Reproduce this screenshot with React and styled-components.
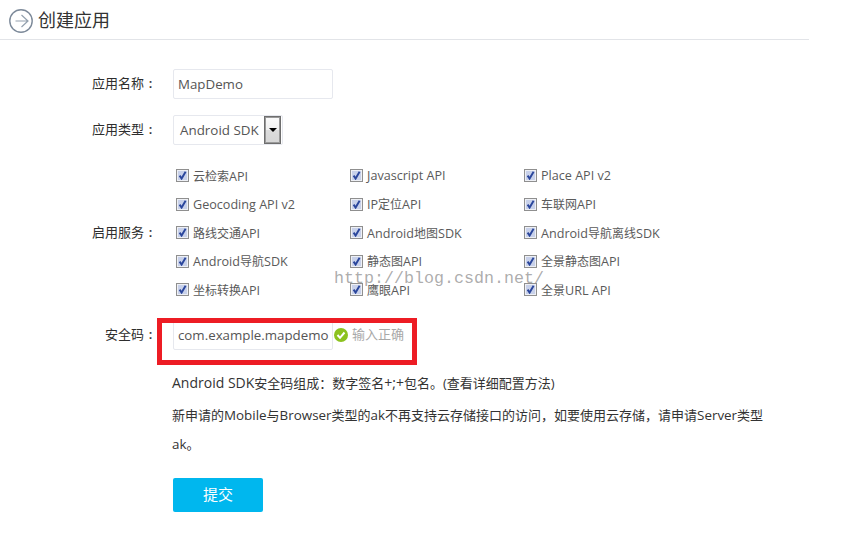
import React from "react";
import styled, { createGlobalStyle } from "styled-components";

const Global = createGlobalStyle`
  html, body { margin: 0; padding: 0; background: #fff; }
  body { width: 861px; height: 536px; overflow: hidden; font-family: "Open Sans", "Noto Sans CJK SC", sans-serif; color: #3a3a3a; }
`;

const Page = styled.div`
  position: relative;
  width: 861px;
  height: 536px;
  padding-top: 9px;
  box-sizing: border-box;
`;

const Header = styled.header`
  width: 809px;
  height: 31px;
  box-sizing: border-box;
  padding-left: 9px;
  display: flex;
  align-items: flex-start;
  gap: 5px;
  border-bottom: 1px solid #e2e4e8;
`;

const Title = styled.h1`
  margin: -1px 0 0;
  font-size: 18px;
  line-height: 24px;
  font-weight: 400;
  color: #333;
`;

const Form = styled.form`
  padding-top: 29px;
  display: flex;
  flex-direction: column;
`;

const Row = styled.div`
  display: flex;
  align-items: center;
  margin-bottom: ${p => p.$mb || 0}px;
`;

const Label = styled.label`
  width: 157px;
  flex: none;
  display: flex;
  justify-content: flex-end;
  font-size: 13px;
  line-height: 28px;
  padding-bottom: ${p => p.$pb ?? 2}px;
  color: #2e2e2e;
  white-space: nowrap;
`;

const Colon = styled.span`
  width: 13px;
  text-align: center;
  font-weight: 600;
`;

const Field = styled.div`
  margin-left: 16px;
  display: flex;
  align-items: center;
`;

const TextBox = styled.div`
  width: 160px;
  height: 30px;
  box-sizing: border-box;
  border: 1px solid #e6e8ee;
  border-radius: 2px;
  padding-left: 4px;
  font-size: 13.3px;
  line-height: 28px;
  color: #555;
  white-space: nowrap;
`;

const SelectBox = styled.div`
  width: 110px;
  height: 30px;
  box-sizing: border-box;
  border: 1px solid #e6e8ee;
  border-radius: 2px;
  display: flex;
  justify-content: space-between;
  align-items: flex-start;
  padding: 0 1px 0 6px;
  font-size: 13.4px;
  line-height: 28px;
  color: #555;
`;

const SelectArrow = styled.span`
  width: 17px;
  height: 28px;
  box-sizing: border-box;
  border: 1px solid #6e6e6e;
  outline: 1px solid #9a9a9a;
  outline-offset: -2px;
  background: linear-gradient(180deg, #fbfbfb 0%, #f1f1f1 48%, #dcdcdc 52%, #d6d6d6 100%);
  display: flex;
  align-items: center;
  justify-content: center;
  &::after {
    content: "";
    border-left: 4px solid transparent;
    border-right: 4px solid transparent;
    border-top: 4px solid #000;
  }
`;

const Services = styled.div`
  margin-left: 16px;
  padding-top: 0.25px;
  display: grid;
  grid-template-columns: repeat(3, 174px);
  grid-auto-rows: 28.5px;
`;

const Service = styled.div`
  display: flex;
  align-items: center;
  padding-left: 3px;
  font-size: 12px;
  color: #5a5a5a;
  white-space: nowrap;
  gap: 4px;
`;

const ServiceLatin = styled.span`
  font-size: 12.6px;
`;

const Box = styled.span`
  width: 13px;
  height: 13px;
  flex: none;
  box-sizing: border-box;
  border: 1px solid #8f8f8f;
  background: #c8d1ea;
  box-shadow: inset 0 0 0 1px #eef0f5;
  display: flex;
  align-items: center;
  justify-content: center;
`;

const Status = styled.span`
  margin-left: 1px;
  display: flex;
  align-items: center;
  gap: 4px;
  font-size: 13px;
  line-height: 20px;
  color: #a8a8a8;
  position: relative;
  top: -1px;
`;

const StatusIcon = styled.svg`
  position: relative;
  top: 1px;
`;

const Note = styled.p`
  margin: ${p => p.$mt || 0}px 0 0 172px;
  width: 600px;
  font-size: 13px;
  line-height: 29px;
  color: #333;
`;

const Wide = styled.span`
  font-size: ${p => p.$size || 14}px;
`;

const Submit = styled.button`
  margin: 19px 0 0 173px;
  width: 90px;
  height: 34px;
  border: 0;
  border-radius: 2px;
  background: #00b7ee;
  color: #fff;
  font-family: inherit;
  font-size: 15px;
  line-height: 32px;
  padding: 0 0 2px;
`;

const RedBox = styled.div`
  position: absolute;
  left: 157px;
  top: 318px;
  width: 260px;
  height: 47px;
  box-sizing: border-box;
  border: 5px solid #ed1c24;
`;

const Watermark = styled.div`
  position: absolute;
  left: 334px;
  top: 269px;
  font-family: "Liberation Mono", monospace;
  font-size: 16.67px;
  line-height: 20px;
  color: rgba(120,120,120,0.62);
  white-space: nowrap;
`;

const Check = () => (
  <svg width="9" height="9" viewBox="0 0 9 9">
    <path d="M1.6 4.6 L3.6 7.6 L7.6 0.8" fill="none" stroke="#2a469c" strokeWidth="1.9" />
  </svg>
);

const services = [
  "云检索API", "Javascript API", "Place API v2",
  "Geocoding API v2", "IP定位API", "车联网API",
  "路线交通API", "Android地图SDK", "Android导航离线SDK",
  "Android导航SDK", "静态图API", "全景静态图API",
  "坐标转换API", "鹰眼API", "全景URL API",
];

const withLatin = s =>
  s.split(/([A-Za-z][A-Za-z0-9 ]*)/).map((part, i) =>
    i % 2 ? <ServiceLatin key={i}>{part}</ServiceLatin> : part
  );

export default function App() {
  return (
    <Page>
      <Global />
      <Header>
        <svg width="24" height="24" viewBox="0 0 24 24">
          <circle cx="12" cy="12" r="11.2" fill="none" stroke="#7d8a9a" strokeWidth="1.4" />
          <path d="M6.5 12 H19 M12.5 6 L19 12 L12.5 18" fill="none" stroke="#93a0ae" strokeWidth="1.2" />
        </svg>
        <Title>创建应用</Title>
      </Header>
      <Form>
        <Row $mb={16}>
          <Label>应用名称<Colon>:</Colon></Label>
          <Field><TextBox>MapDemo</TextBox></Field>
        </Row>
        <Row $mb={16}>
          <Label>应用类型<Colon>:</Colon></Label>
          <Field>
            <SelectBox>Android SDK<SelectArrow /></SelectBox>
          </Field>
        </Row>
        <Row $mb={16}>
          <Label $pb={1}>启用服务<Colon>:</Colon></Label>
          <Services>
            {services.map(s => (
              <Service key={s}><Box><Check /></Box><span>{withLatin(s)}</span></Service>
            ))}
          </Services>
        </Row>
        <Row $mb={18}>
          <Label>安全码<Colon>:</Colon></Label>
          <Field>
            <TextBox>com.example.mapdemo</TextBox>
            <Status>
              <StatusIcon width="14" height="14" viewBox="0 0 14 14">
                <circle cx="7" cy="7" r="7" fill="#8cc21f" />
                <path d="M3.5 7 L6 9.8 L10.5 4.5" fill="none" stroke="#fff" strokeWidth="2" />
              </StatusIcon>
              输入正确
            </Status>
          </Field>
        </Row>
        <Note><Wide>Android SDK</Wide>安全码组成：数字签名<Wide>+;+</Wide>包名。(查看详细配置方法)</Note>
        <Note $mt={3}>新申请的<Wide $size={13.4}>Mobile</Wide>与<Wide $size={13.4}>Browser</Wide>类型的<Wide $size={13.4}>ak</Wide>不再支持云存储接口的访问，如要使用云存储，请申请<Wide $size={13.4}>Server</Wide>类型<br /><Wide $size={13.4}>ak</Wide>。</Note>
        <Submit type="button">提交</Submit>
      </Form>
      <RedBox />
      <Watermark>http://blog.csdn.net/</Watermark>
    </Page>
  );
}
